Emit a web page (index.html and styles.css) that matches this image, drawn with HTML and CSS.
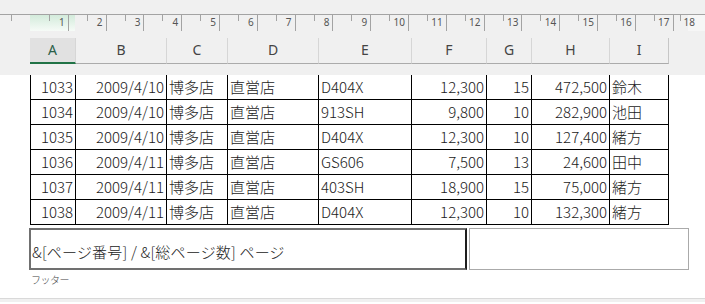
FILE: index.html
```html
<!DOCTYPE html>
<html lang="ja">
<head>
  <meta charset="UTF-8">
  <title>ページ レイアウト - フッター</title>
  <link rel="stylesheet" href="styles.css">
</head>
<body>

  <div class="chrome">
    <div class="ruler">
      <div class="ruler-lead"></div>
      <div class="tick">1</div>
      <div class="tick">2</div>
      <div class="tick">3</div>
      <div class="tick">4</div>
      <div class="tick">5</div>
      <div class="tick">6</div>
      <div class="tick">7</div>
      <div class="tick">8</div>
      <div class="tick">9</div>
      <div class="tick">10</div>
      <div class="tick">11</div>
      <div class="tick">12</div>
      <div class="tick">13</div>
      <div class="tick">14</div>
      <div class="tick">15</div>
      <div class="tick">16</div>
      <div class="tick">17</div>
      <div class="tick last">18</div>
    </div>

    <div class="colheads cols">
      <div class="colhead selected">A</div>
      <div class="colhead">B</div>
      <div class="colhead">C</div>
      <div class="colhead">D</div>
      <div class="colhead">E</div>
      <div class="colhead">F</div>
      <div class="colhead">G</div>
      <div class="colhead">H</div>
      <div class="colhead">I</div>
    </div>
  </div>

  <div class="page">
    <div class="sheet" id="sheet"></div>

    <div class="footer">
      <div class="footer-box active">&amp;[ページ番号] / &amp;[総ページ数] ページ</div>
      <div class="footer-box"></div>
    </div>
    <div class="footer-label">フッター</div>
  </div>

  <div class="statusbar"></div>

  <script>
    // 売上データ (No, 日付, 店舗, 区分, 機種, 単価, 数量, 金額, 担当)
    var datos = [
      ["1033", "2009/4/10", "博多店", "直営店", "D404X", "12,300", "15", "472,500", "鈴木"],
      ["1034", "2009/4/10", "博多店", "直営店", "913SH", "9,800", "10", "282,900", "池田"],
      ["1035", "2009/4/10", "博多店", "直営店", "D404X", "12,300", "10", "127,400", "緒方"],
      ["1036", "2009/4/11", "博多店", "直営店", "GS606", "7,500", "13", "24,600", "田中"],
      ["1037", "2009/4/11", "博多店", "直営店", "403SH", "18,900", "15", "75,000", "緒方"],
      ["1038", "2009/4/11", "博多店", "直営店", "D404X", "12,300", "10", "132,300", "緒方"]
    ];
    var derecha = [true, true, false, false, false, true, true, true, false];

    var sheet = document.getElementById("sheet");
    datos.forEach(function (fila) {
      var row = document.createElement("div");
      row.className = "row cols";
      fila.forEach(function (valor, i) {
        var cell = document.createElement("div");
        cell.className = derecha[i] ? "cell num" : "cell";
        cell.textContent = valor;
        row.appendChild(cell);
      });
      sheet.appendChild(row);
    });
  </script>

</body>
</html>
```

FILE: styles.css
```css
* {
  margin: 0;
  padding: 0;
  box-sizing: border-box;
}

body {
  width: 705px;
  height: 304px;
  overflow: hidden;
  background: #fff;
  font-family: "Noto Sans CJK JP", "Noto Sans", sans-serif;
  font-weight: 300;
  color: #1a1a1a;
}

/* ---- ルーラーと列見出し ---- */
.chrome {
  height: 75px;
  background: #f0f0f0;
  padding-top: 14px;
}

.ruler {
  display: flex;
  height: 17px;
  border-top: 1px solid #a3a3a3;
  overflow: hidden;
  background:
    linear-gradient(#d3ebdb, #f6fbf7) 30px 0 / 45px 16px no-repeat,
    linear-gradient(#f6f6f6, #f6f6f6) 688px 0 / 17px 16px no-repeat,
    #f0f0f0;
}

.ruler-lead {
  flex: 0 0 31px;
  background: linear-gradient(#a3a3a3, #a3a3a3) 11px 0 / 1px 6px no-repeat;
}

.tick {
  flex: 0 0 37.8px;
  border-right: 1px solid #a3a3a3;
  background: linear-gradient(#a3a3a3, #a3a3a3) 18px 0 / 1px 6px no-repeat;
  font-family: "Noto Sans", sans-serif;
  font-weight: 400;
  font-size: 10px;
  line-height: 10px;
  padding-top: 2px;
  padding-right: 3px;
  text-align: right;
  color: #555;
}

/* 最後の目盛りは画面の端で切れる */
.tick.last {
  flex-basis: 17px;
  border-right: 0;
  background: linear-gradient(#a3a3a3, #a3a3a3) 6px 0 / 1px 6px no-repeat;
  text-align: left;
  padding: 2px 0 0 10px;
  white-space: nowrap;
}

.cols {
  display: grid;
  grid-template-columns: 46px 91px 61px 91px 93px 75px 45px 78px 59px;
  margin-left: 30px;
  width: 639px;
}

.colheads {
  margin-top: 7px;
  height: 26px;
}

.colhead {
  border-right: 1px solid #d6d6d6;
  border-bottom: 1px solid #ababab;
  font-family: "Noto Sans", sans-serif;
  font-weight: 400;
  font-size: 14px;
  line-height: 24px;
  text-align: center;
  color: #444;
}

.colhead:last-child {
  border-right-color: #c6c6c6;
}

.colhead.selected {
  background: #e1e1e1;
  border-bottom: 2px solid #217346;
  color: #2b6049;
}

/* ---- シート ---- */
.sheet {
  height: 153px;
}

.row {
  height: 25px;
  border-bottom: 1px solid #000;
}

.cell {
  border-right: 1px solid #000;
  font-size: 15px;
  line-height: 24px;
  padding: 0 2px;
  white-space: nowrap;
}

.cell:first-child {
  border-left: 1px solid #000;
}

.cell.num {
  text-align: right;
}

/* ---- フッター ---- */
.footer {
  display: flex;
  gap: 2px;
  margin-left: 29px;
  width: 660px;
  height: 42px;
}

.footer-box {
  flex: 1;
  border: 1px solid #aaa;
}

.footer-box.active {
  flex: 0 0 438px;
  border: 2px solid #707070;
  border-right-color: #1e1e1e;
  font-size: 15px;
  line-height: 15px;
  padding-top: 14px;
  padding-left: 1px;
  letter-spacing: 0.2px;
  color: #222;
  white-space: nowrap;
}

.footer-label {
  margin: 4px 0 0 31px;
  font-size: 10px;
  line-height: 11px;
  color: #444;
  letter-spacing: -0.5px;
}

.statusbar {
  height: 4px;
  margin-top: 13px;
  background: #f0f0f0;
  border-top: 1px solid #d9d9d9;
}
```
